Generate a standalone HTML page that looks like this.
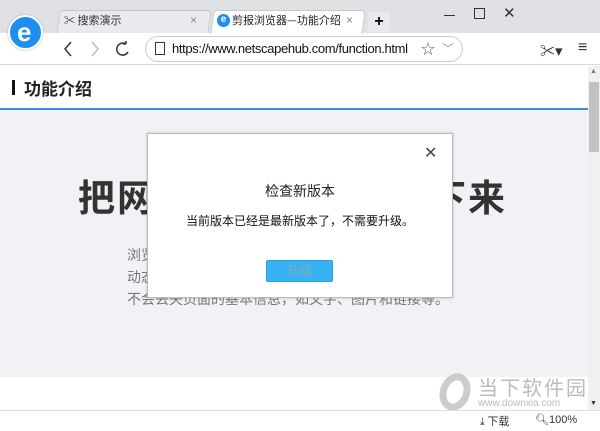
<!DOCTYPE html>
<html><head><meta charset="utf-8"><style>
*{margin:0;padding:0;box-sizing:border-box}
body{width:600px;height:431px;overflow:hidden;position:relative;background:#fff;font-family:"Liberation Sans","Noto Sans CJK SC",sans-serif}
.abs{position:absolute}
.cjk{font-family:"Noto Sans CJK SC","WenQuanYi Zen Hei",sans-serif}
</style></head><body>
<div class="abs" style="left:0;top:0;width:600px;height:33px;background:#dfe1e5"></div>
<div class="abs" style="left:0;top:33px;width:600px;height:32px;background:#fff;border-bottom:1px solid #d8d8d8"></div>
<div class="abs" style="left:8px;top:15px;width:35px;height:35px;border-radius:50%;background:#1e8ff0;border:2px solid #fff;box-shadow:0 0 2px #9ab"></div>
<div class="abs" style="left:17px;top:17px;color:#fff;font-size:26px;font-weight:bold">e</div>
<div class="abs" style="left:58px;top:10px;width:152px;height:23px;background:#e8eaed;border:1px solid #c8c8c8;border-bottom:none;border-radius:4px 4px 0 0;transform:skewX(-8deg)"></div>
<div class="abs cjk" style="left:64px;top:12px;font-size:11px;color:#333">✂ 搜索演示</div>
<div class="abs" style="left:190px;top:13px;font-size:12px;color:#888">×</div>
<div class="abs" style="left:212px;top:10px;width:152px;height:24px;background:#fff;border:1px solid #c8c8c8;border-bottom:none;border-radius:4px 4px 0 0;transform:skewX(-8deg)"></div>
<div class="abs" style="left:217px;top:14px;width:13px;height:13px;border-radius:50%;background:#1e8ff0;color:#fff;font-size:10px;font-weight:bold;text-align:center;line-height:12px">e</div>
<div class="abs cjk" style="left:232px;top:12px;font-size:11px;color:#222">剪报浏览器—功能介绍</div>
<div class="abs" style="left:346px;top:13px;font-size:12px;color:#888">×</div>
<div class="abs" style="left:368px;top:12px;width:22px;height:20px;background:#e8eaed;border-radius:3px;font-size:16px;font-weight:bold;text-align:center;line-height:20px">+</div>
<div class="abs" style="left:444px;top:15px;width:11px;height:1px;background:#333"></div>
<div class="abs" style="left:474px;top:8px;width:11px;height:11px;border:1px solid #333"></div>
<div class="abs" style="left:503px;top:4px;font-size:15px;color:#333">✕</div>
<svg class="abs" style="left:60px;top:38px" width="80" height="22" viewBox="0 0 80 22" fill="none" stroke-width="1.5">
<path d="M11 4 L5 11 L11 18" stroke="#333"/>
<path d="M32 4 L38 11 L32 18" stroke="#bbb"/>
<path d="M66 6 A6 6 0 1 0 68 14 M66 6 L66 3 M66 6 L63 6" stroke="#333"/>
</svg>
<div class="abs" style="left:145px;top:36px;width:318px;height:26px;border:1px solid #ccc;border-radius:13px"></div>
<div class="abs" style="left:155px;top:42px;width:10px;height:13px;border:1.5px solid #333"></div>
<div class="abs" style="left:172px;top:41px;font-size:13px;color:#111;letter-spacing:-0.35px">https://www.netscapehub.com/function.html</div>
<div class="abs" style="left:421px;top:39px;font-size:14px;color:#666">☆</div>
<div class="abs" style="left:442px;top:40px;font-size:12px;color:#999">﹀</div>
<div class="abs" style="left:540px;top:40px;font-size:15px;color:#333">✂▾</div>
<div class="abs" style="left:578px;top:39px;font-size:16px;color:#333">≡</div>
<div class="abs" style="left:12px;top:80px;width:3px;height:15px;background:#111"></div>
<div class="abs cjk" style="left:24px;top:75px;font-size:17px;font-weight:bold;color:#222">功能介绍</div>
<div class="abs" style="left:0;top:108px;width:588px;height:2px;background:#2e8de6"></div>
<div class="abs" style="left:0;top:110px;width:588px;height:267px;background:#f1f2f6"></div>
<div class="abs cjk" style="left:78px;top:168px;font-size:37px;font-weight:bold;color:#333;letter-spacing:2px;white-space:nowrap">把网页内容完整地剪下来</div>
<div class="abs cjk" style="left:127px;top:244px;font-size:14px;line-height:22px;color:#777;white-space:nowrap">浏览器的剪报功能会自动识别网页中的正文，并且<br>动态调整内容，去除广告等无关元素，一键保<br>不会丢失页面的基本信息，如文字、图片和链接等。</div>
<div class="abs" style="left:588px;top:66px;width:12px;height:344px;background:#f0f0f0"></div>
<div class="abs" style="left:589px;top:82px;width:10px;height:70px;background:#c2c2c2"></div>
<div class="abs" style="left:590px;top:68px;font-size:7px;color:#777">▲</div>
<div class="abs" style="left:590px;top:400px;font-size:7px;color:#333">▼</div>
<div class="abs" style="left:440px;top:373px;width:30px;height:38px;border:7px solid #ccc;border-radius:50%;transform:rotate(20deg)"></div>
<div class="abs cjk" style="left:478px;top:372px;font-size:20px;color:#bbb;letter-spacing:2px">当下软件园</div>
<div class="abs" style="left:478px;top:398px;font-size:10px;color:#bbb">www.downxia.com</div>
<div class="abs" style="left:0;top:410px;width:600px;height:21px;background:#fff;border-top:1px solid #ddd"></div>
<div class="abs cjk" style="left:480px;top:413px;font-size:11px;color:#333">⤓ 下载</div>
<div class="abs" style="left:535px;top:413px;font-size:11px;color:#333">🔍︎100%</div>
<div class="abs" style="left:147px;top:133px;width:306px;height:165px;background:#fff;border:1px solid #bbb;box-shadow:0 0 3px rgba(0,0,0,.2)"></div>
<div class="abs" style="left:424px;top:143px;font-size:16px;color:#444">✕</div>
<div class="abs cjk" style="left:147px;top:181px;width:306px;text-align:center;font-size:14px;color:#222">检查新版本</div>
<div class="abs cjk" style="left:147px;top:212px;width:306px;text-align:center;font-size:12px;color:#111">当前版本已经是最新版本了，不需要升级。</div>
<div class="abs cjk" style="left:266px;top:260px;width:67px;height:22px;background:#37b3f4;border:1px solid #2aa0e0;border-radius:2px;text-align:center;font-size:12px;line-height:20px;color:#8aa">升级</div>
</body></html>
